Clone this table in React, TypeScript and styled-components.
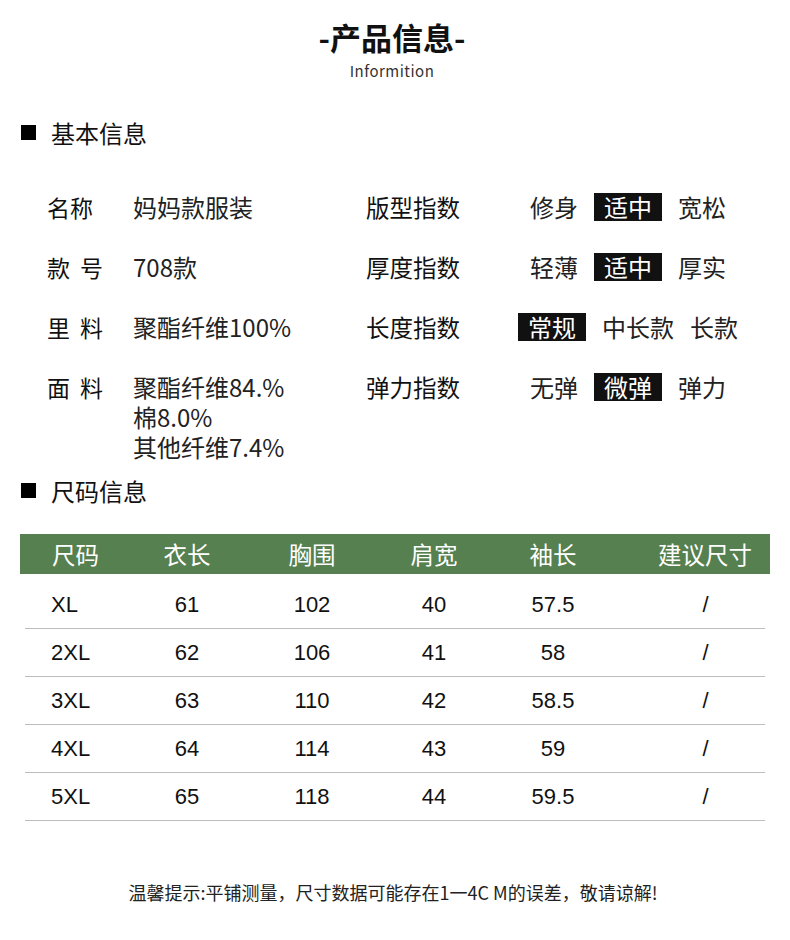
import React from "react";
import styled, { createGlobalStyle } from "styled-components";

const GlobalStyle = createGlobalStyle`
  html, body { margin: 0; padding: 0; background: #fff; }
  body { font-family: "Noto Sans CJK SC", "Noto Sans", sans-serif; color: #111; }
`;

const CJK = `"Noto Sans CJK SC", "Noto Sans", sans-serif`;
const ARIAL = `"Liberation Sans", "Noto Sans CJK SC", sans-serif`;

const Page = styled.div`
  width: 790px;
  height: 940px;
  background: #fff;
  overflow: hidden;
`;

const TitleBlock = styled.header`
  display: flex;
  flex-direction: column;
  align-items: center;
  padding-top: 16px;
  padding-right: 6px;
`;

const Title = styled.h1`
  margin: 0;
  font-family: ${CJK};
  font-weight: 700;
  font-size: 31px;
  line-height: 42px;
  color: #111;
`;

const Subtitle = styled.div`
  font-family: ${CJK};
  font-size: 15px;
  line-height: 20px;
  color: #333;
  letter-spacing: 0.5px;
  margin-top: 3px;
`;

const SectionHead = styled.div<{ $top: number }>`
  display: flex;
  align-items: center;
  gap: 15px;
  padding-left: 21px;
  margin-top: ${(p) => p.$top}px;
  height: 34px;
  font-family: ${CJK};
  font-size: 24px;
  color: #111;
`;

const Square = styled.span`
  width: 15px;
  height: 15px;
  background: #000;
  display: block;
`;

const InfoGrid = styled.div`
  display: grid;
  grid-template-columns: 86px 233px 154px 216px;
  row-gap: 30px;
  padding-left: 47px;
  margin-top: 43px;
  font-family: ${CJK};
  font-size: 23px;
  line-height: 30px;
  align-items: start;
`;

const Label = styled.div<{ $spaced?: boolean; $wide?: boolean }>`
  color: #111;
  font-size: ${(p) => (p.$wide ? "23.5px" : "23px")};
  letter-spacing: ${(p) => (p.$spaced ? "10px" : "0")};
  white-space: nowrap;
`;

const Value = styled.div`
  color: #222;
  font-size: 24px;
  white-space: nowrap;
`;

const Line = styled.div`
  height: 30px;
  line-height: 30px;
`;

const Options = styled.div`
  display: flex;
  justify-content: center;
  align-items: center;
  gap: 16px;
  height: 30px;
  font-size: 24px;
`;

const Option = styled.span<{ $on?: boolean }>`
  padding: 0 ${(p) => (p.$on ? "10px" : "0")};
  height: 28px;
  line-height: 28px;
  background: ${(p) => (p.$on ? "#111" : "transparent")};
  color: ${(p) => (p.$on ? "#fff" : "#222")};
  white-space: nowrap;
`;

const Table = styled.div`
  margin: 27px 20px 0 20px;
  width: 750px;
`;

const HeadRow = styled.div`
  display: grid;
  grid-template-columns: 110px 114px 136px 108px 130px 152px;
  height: 40px;
  align-items: center;
  background: #56804f;
  font-family: ${CJK};
  font-size: 23.5px;
  color: #fff;
`;

const BodyRow = styled.div`
  display: grid;
  grid-template-columns: 105px 114px 136px 108px 130px 147px;
  height: 47px;
  align-items: center;
  border-bottom: 1px solid #bdbdbd;
  margin: 0 5px;
  font-family: ${ARIAL};
  font-size: 22px;
  color: #111;
  &:first-of-type { margin-top: 7px; }
`;

const Cell = styled.div<{ $left?: number; $pad?: number }>`
  text-align: ${(p) => (p.$left !== undefined ? "left" : "center")};
  padding-left: ${(p) => (p.$left ?? 0) + (p.$pad ?? 0)}px;
  white-space: nowrap;
`;

const Footer = styled.div`
  margin-top: 59px;
  text-align: center;
  font-family: ${CJK};
  font-size: 18px;
  line-height: 24px;
  color: #222;
  padding-right: 4px;
`;

const left = [
  { label: "名称", value: ["妈妈款服装"] },
  { label: "款号", spaced: true, value: ["708款"] },
  { label: "里料", spaced: true, value: ["聚酯纤维100%"] },
  { label: "面料", spaced: true, value: ["聚酯纤维84.%", "棉8.0%", "其他纤维7.4%"] },
];

const right = [
  { label: "版型指数", opts: ["修身", "适中", "宽松"], on: 1 },
  { label: "厚度指数", opts: ["轻薄", "适中", "厚实"], on: 1 },
  { label: "长度指数", opts: ["常规", "中长款", "长款"], on: 0 },
  { label: "弹力指数", opts: ["无弹", "微弹", "弹力"], on: 1 },
];

const heads = ["尺码", "衣长", "胸围", "肩宽", "袖长", "建议尺寸"];
const rows = [
  ["XL", "61", "102", "40", "57.5", "/"],
  ["2XL", "62", "106", "41", "58", "/"],
  ["3XL", "63", "110", "42", "58.5", "/"],
  ["4XL", "64", "114", "43", "59", "/"],
  ["5XL", "65", "118", "44", "59.5", "/"],
];

export default function App() {
  return (
    <Page>
      <GlobalStyle />
      <TitleBlock>
        <Title>-产品信息-</Title>
        <Subtitle>Informition</Subtitle>
      </TitleBlock>

      <SectionHead $top={34}>
        <Square />
        基本信息
      </SectionHead>

      <InfoGrid>
        {left.map((l, i) => (
          <React.Fragment key={l.label}>
            <Label $spaced={l.spaced}>{l.label}</Label>
            <Value>
              {l.value.map((v) => (
                <Line key={v}>{v}</Line>
              ))}
            </Value>
            <Label $wide>{right[i].label}</Label>
            <Options>
              {right[i].opts.map((o, j) => (
                <Option key={o} $on={j === right[i].on}>
                  {o}
                </Option>
              ))}
            </Options>
          </React.Fragment>
        ))}
      </InfoGrid>

      <SectionHead $top={11}>
        <Square />
        尺码信息
      </SectionHead>

      <Table>
        <HeadRow>
          {heads.map((h, i) => (
            <Cell key={h} $left={i === 0 ? 32 : undefined} $pad={i === 5 ? 22 : 0}>
              {h}
            </Cell>
          ))}
        </HeadRow>
        <div>
          {rows.map((r) => (
            <BodyRow key={r[0]}>
              {r.map((c, i) => (
                <Cell key={i} $left={i === 0 ? 26 : undefined} $pad={i === 5 ? 28 : 0}>
                  {c}
                </Cell>
              ))}
            </BodyRow>
          ))}
        </div>
      </Table>

      <Footer>温馨提示:平铺测量，尺寸数据可能存在1一4C M的误差，敬请谅解!</Footer>
    </Page>
  );
}
